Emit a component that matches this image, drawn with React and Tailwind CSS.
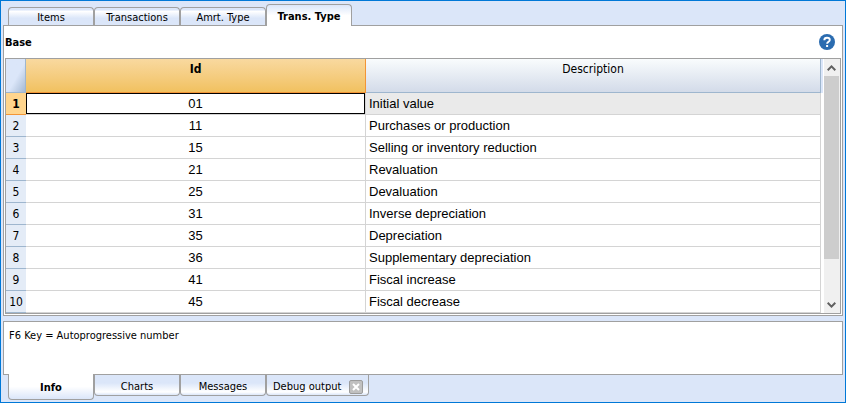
import React from 'react';

const rows = [
  ['01', 'Initial value'],
  ['11', 'Purchases or production'],
  ['15', 'Selling or inventory reduction'],
  ['21', 'Revaluation'],
  ['25', 'Devaluation'],
  ['31', 'Inverse depreciation'],
  ['35', 'Depreciation'],
  ['36', 'Supplementary depreciation'],
  ['41', 'Fiscal increase'],
  ['45', 'Fiscal decrease'],
];

function TopTab({ label, active }) {
  return (
    <button
      type="button"
      role="tab"
      aria-selected={!!active}
      className={
        'w-[86px] whitespace-nowrap rounded-t-[4px] border border-b-0 border-[#a0a0a0] pt-[2px] text-center ' +
        (active
          ? 'z-10 -mb-px h-[22px] bg-linear-to-b from-[#dbe6f9] to-white to-50% font-bold'
          : 'h-[18px] bg-linear-to-b from-[#dbe6f9] from-10% via-white via-20% to-[#dbe6f9] to-60%')
      }
    >
      {label}
    </button>
  );
}

function BottomTab({ label, active, closable }) {
  return (
    <div
      className={
        'flex items-center rounded-b-[4px] border border-t-0 border-[#a0a0a0] ' +
        (active
          ? 'z-10 -mt-px h-[26px] w-[86px] bg-linear-to-b from-white from-50% to-[#dbe6f9] font-bold'
          : 'h-[21px] bg-linear-to-b from-[#dbe6f9] from-40% via-white via-85% to-[#dbe6f9] ' +
            (closable ? 'w-[103px]' : 'w-[86px]'))
      }
    >
      <button
        type="button"
        role="tab"
        aria-selected={!!active}
        className={'h-full whitespace-nowrap pt-[3px] ' + (closable ? 'pl-[6px] text-left' : 'w-full text-center')}
      >
        {label}
      </button>
      {closable && (
        <button
          type="button"
          aria-label="Close tab"
          className="mt-[3px] mr-[5px] ml-auto flex size-[14px] items-center justify-center rounded-[2px] border border-[#9c9c9c] bg-[#c0c0c0]"
        >
          <svg width="8" height="8" viewBox="0 0 8 8" stroke="#fff" strokeWidth="2">
            <path d="M1 1L7 7M7 1L1 7" />
          </svg>
        </button>
      )}
    </div>
  );
}

export default function App() {
  return (
    <div className="flex min-h-screen flex-col border border-[#0078d7] bg-[#dbe6f9] px-[2px] font-['DejaVu_Sans_Condensed','DejaVu_Sans',sans-serif] text-[11px] leading-[14px] text-black [font-stretch:condensed]">
      <div role="tablist" className="flex h-[24px] items-end pl-[5px]">
        <TopTab label="Items" />
        <TopTab label="Transactions" />
        <TopTab label="Amrt. Type" />
        <TopTab label="Trans. Type" active />
      </div>

      <main className="border border-[#a0a0a0] bg-white p-px pt-0">
        <div className="flex h-[32px] items-center justify-between pr-[6px]">
          <h1 className="pt-[2px] font-bold">Base</h1>
          <button type="button" aria-label="Help" className="size-[16px]">
            <svg width="16" height="16" viewBox="0 0 16 16" fill="none">
              <circle cx="8" cy="8" r="8" fill="#2b6cb0" />
              <path d="M5.3 6.2C5.3 4.5 6.5 3.7 8 3.7S10.8 4.6 10.8 6C10.8 7.7 8.1 7.9 8.1 9.8" stroke="#fff" strokeWidth="1.9" />
              <path d="M7.1 11H9.1V13H7.1Z" fill="#fff" />
            </svg>
          </button>
        </div>

        <div className="flex border border-[#a0a0a0]">
          <div className="flex-1">
            <table className="w-full table-fixed border-separate border-spacing-0">
              <colgroup>
                <col className="w-[20px]" />
                <col className="w-[340px]" />
                <col />
              </colgroup>
              <thead>
                <tr className="h-[34px] text-[12px]">
                  <th
                    aria-label="Select all"
                    className="border-r border-b border-[#9eb6ce] bg-linear-to-br from-[#dbe6f9] from-55% to-[#a5b9d3] p-0"
                  />
                  <th className="border-r border-b border-[#f29536] bg-linear-to-b from-[#f9d99f] to-[#f1c15f] p-0 pt-[3px] align-top font-bold">
                    Id
                  </th>
                  <th className="border-r border-b border-[#9eb6ce] bg-linear-to-b from-[#f9fcfd] to-[#d3dbe9] p-0 pt-[3px] align-top font-normal">
                    Description
                  </th>
                </tr>
              </thead>
              <tbody>
                {rows.map(([id, description], i) => (
                  <tr key={id} className="h-[22px] font-['Liberation_Sans',Arial,sans-serif] text-[13px]">
                    <th
                      scope="row"
                      className={
                        "border-b p-0 text-center font-['DejaVu_Sans_Condensed','DejaVu_Sans',sans-serif] text-[12px] " +
                        (i === 0
                          ? 'border-[#f29536] bg-[#ffd58d] font-bold'
                          : 'border-[#9eb6ce] bg-[#e4ecf7] font-normal')
                      }
                    >
                      {i + 1}
                    </th>
                    <td className="border-r border-b border-[#d4d4d4] p-0 text-center">
                      <div
                        className={
                          'flex h-[21px] items-center justify-center ' + (i === 0 ? 'border border-black' : '')
                        }
                      >
                        {id}
                      </div>
                    </td>
                    <td
                      className={
                        'border-r border-b border-[#d4d4d4] p-0 pl-[3px] ' + (i === 0 ? 'bg-[#eaeaea]' : '')
                      }
                    >
                      {description}
                    </td>
                  </tr>
                ))}
              </tbody>
            </table>
          </div>
          <div className="h-[34px] w-[2px] bg-[#dbe6f9]" />
          <div className="ml-px flex w-[16px] flex-col bg-[#f0f0f0] pr-px">
            <button type="button" aria-label="Scroll up" className="flex h-[17px] items-center justify-center">
              <svg width="9" height="6" viewBox="0 0 9 6" fill="none" stroke="#606060" strokeWidth="2">
                <path d="M0.7 5.2L4.5 1.4L8.3 5.2" />
              </svg>
            </button>
            <div className="h-[183px] bg-[#cdcdcd]" />
            <button type="button" aria-label="Scroll down" className="mt-auto flex h-[17px] items-center justify-center">
              <svg width="9" height="6" viewBox="0 0 9 6" fill="none" stroke="#606060" strokeWidth="2">
                <path d="M0.7 0.8L4.5 4.6L8.3 0.8" />
              </svg>
            </button>
          </div>
        </div>
      </main>

      <section className="mt-[5px] h-[54px] border border-[#a0a0a0] bg-white px-[5px] pt-[7px]">
        <p>F6 Key = Autoprogressive number</p>
      </section>
      <div role="tablist" className="flex items-start pl-[5px]">
        <BottomTab label="Info" active />
        <BottomTab label="Charts" />
        <BottomTab label="Messages" />
        <BottomTab label="Debug output" closable />
      </div>
    </div>
  );
}
